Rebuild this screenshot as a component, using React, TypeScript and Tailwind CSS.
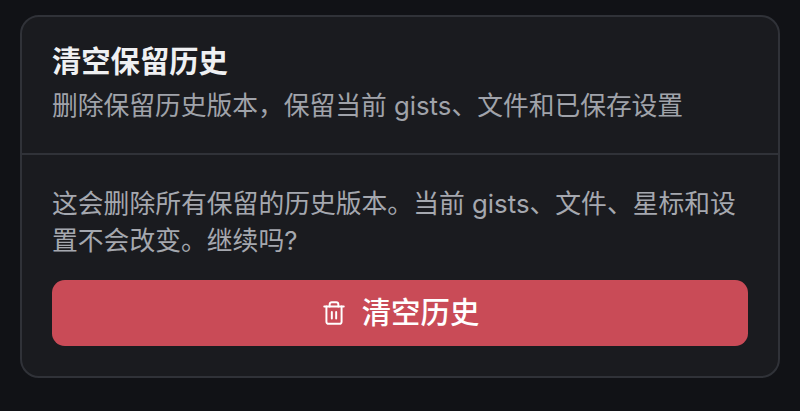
import { Trash2 } from "lucide-react";

export default function App() {
  return (
    <div className="flex h-[411px] w-[800px] flex-col overflow-hidden bg-[#111216] px-[20px] pt-[15px] font-['Inter','Noto_Sans_CJK_SC',sans-serif]">
      <div className="h-[363px] rounded-[19px] border-2 border-[#303238] bg-[#1a1b1f]">
        <div className="h-[138px] border-b-2 border-[#303238] px-[30px] pt-[26px]">
          <h2 className="text-[29.3px] leading-[38px] font-bold text-[#eff0f2]">清空保留历史</h2>
          <p className="mt-[6px] text-[25.75px] leading-[38px] text-[#a0a3aa]">
            删除保留历史版本，保留当前 gists、文件和已保存设置
          </p>
        </div>
        <div className="px-[30px] pt-[30px]">
          <p className="text-[25.8px] leading-[37px] text-[#a5a8af]">
            这会删除所有保留的历史版本。当前 gists、文件、星标和设置不会改变。继续吗?
          </p>
          <button
            type="button"
            className="mt-[21px] flex h-[66px] w-full items-center justify-center gap-[15px] rounded-[12.8px] bg-[#c94b57] text-[29.4px] font-medium text-white"
          >
            <Trash2 size={26} strokeWidth={1.8} />
            清空历史
          </button>
        </div>
      </div>
    </div>
  );
}
